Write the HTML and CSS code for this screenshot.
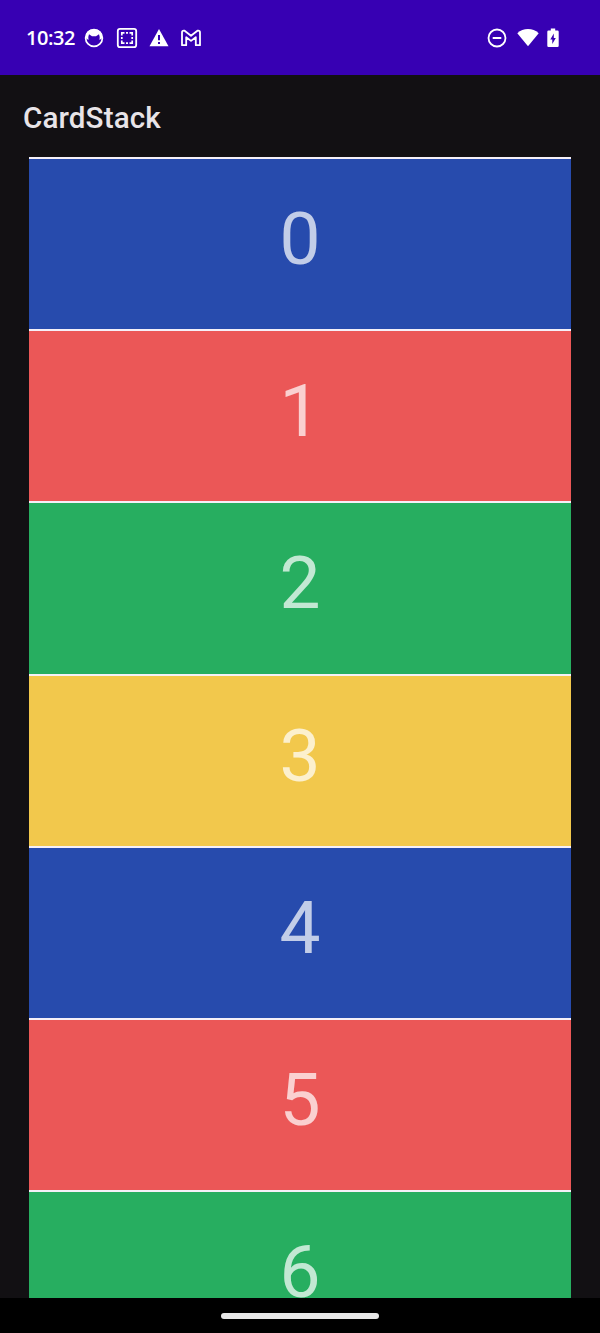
FILE: index.html
```
<!DOCTYPE html>
<html lang="en">
<head>
<meta charset="utf-8">
<title>CardStack</title>
<link rel="stylesheet" href="styles.css">
</head>
<body>
<div class="screen">
  <header class="status">
    <div class="status-left">
      <span class="clock">10:32</span>
      <svg class="icon" viewBox="0 0 22 22"><circle cx="11" cy="11" r="8.400" fill="none" stroke="#fff" stroke-width="1.700"/><path d="M2.600 11Q2.600 2.200 11 2.200T19.400 11L16.500 13Q17.300 10.500 16 7.300L13 9.200H9L6 7.300Q4.700 10.500 5.500 13Z" fill="#fff"/></svg>
      <svg class="icon" viewBox="0 0 22 22" fill="none" stroke="#fff"><rect x="1.800" y="1.800" width="18.400" height="18.400" rx="2.200" stroke-width="1.800"/><path d="M5.800 8.500V5.800H8.500M10 5.800H12M13.500 5.800H16.200V8.500M16.200 10V12M16.200 13.500V16.200H13.500M12 16.200H10M8.500 16.200H5.800V13.500M5.800 12V10" stroke-width="1.700"/></svg>
      <svg class="icon" viewBox="0 0 22 22"><path d="M11 2L20.500 19.200H1.500Z" fill="#fff"/><path d="M11 8V13.200M11 15V17" stroke="#3700b3" stroke-width="2"/></svg>
      <svg class="icon" viewBox="0 0 22 22"><path d="M2 18.200V5.500Q2 3.700 3.800 3.700H4.600L11 8.700L17.400 3.700H18.200Q20 3.700 20 5.500V18.200H15.800V10.200L11 13.900L6.200 10.200V18.200Z" fill="none" stroke="#fff" stroke-width="1.800" stroke-linejoin="round"/></svg>
    </div>
    <div class="status-right">
      <svg class="icon" viewBox="0 0 22 22" fill="none" stroke="#fff" stroke-width="1.800"><circle cx="11" cy="11" r="8.500"/><path d="M6.700 11H15.300" stroke-width="2"/></svg>
      <svg class="icon" viewBox="0 0 22 22"><path d="M.300 6.200Q5 2 11 2T21.700 6.200L11 19.300Z" fill="#fff"/></svg>
      <svg class="battery" viewBox="0 0 12 22"><path d="M3.800 1.500H8.200V3.500H10.500Q11.700 3.500 11.700 4.700V18.800Q11.700 20 10.500 20H1.500Q.300 20 .300 18.800V4.700Q.300 3.500 1.500 3.500H3.800Z" fill="#fff"/><path d="M6.800 6.500L3.300 12.500H5.300V17L8.800 11H6.800Z" fill="#3700b3"/></svg>
    </div>
  </header>
  <h1 class="title">CardStack</h1>
  <main class="stack">
    <div class="card blue">0</div>
    <div class="card red">1</div>
    <div class="card green">2</div>
    <div class="card yellow">3</div>
    <div class="card blue">4</div>
    <div class="card red">5</div>
    <div class="card green">6</div>
  </main>
  <footer class="nav"><div class="handle"></div></footer>
</div>
</body>
</html>
```
FILE: styles.css
```
body { margin: 0; background: #121013; }
.screen {
  width: 600px; height: 1333px; overflow: hidden;
  display: flex; flex-direction: column;
  background: #121013; font-family: Roboto, sans-serif;
}
.status {
  box-sizing: border-box; height: 75px; flex: none;
  display: flex; justify-content: space-between; align-items: center;
  padding: 1px 41px 0 26px; background: #3700b3; color: #fff;
}
.status-left { display: flex; align-items: center; gap: 10.200px; }
.status-right { display: flex; align-items: center; gap: 9px; }
.clock { width: 47.300px; font: 600 20px/24px "Open Sans", sans-serif; letter-spacing: -0.450px; white-space: nowrap; }
.icon { width: 22px; height: 22px; flex: none; }
.battery { width: 12px; height: 22px; flex: none; margin-left: -1px; }
.title {
  box-sizing: border-box; height: 82px; flex: none; margin: 0;
  padding: 1px 0 0 23px; color: #e8e4e8;
  font-size: 29.600px; font-weight: 500; line-height: 84px; letter-spacing: 0.120px;
}
.stack { flex: 1; min-height: 0; margin: 0 29.500px 0 29.400px; overflow: hidden; }
.card {
  box-sizing: border-box; height: 172.200px; border-top: 2px solid #f5f0f8;
  color: rgba(255, 255, 255, 0.72); text-align: center;
  font-size: 73px; line-height: 160px;
}
.blue { background: #274bad; }
.red { background: #eb5757; }
.green { background: #27ae60; }
.yellow { background: #f2c84c; }
.nav {
  box-sizing: border-box; height: 35px; flex: none; display: flex; justify-content: center; align-items: center;
  background: #000;
}
.handle { width: 158px; height: 6px; border-radius: 3px; background: #e8e8e8; }
```
